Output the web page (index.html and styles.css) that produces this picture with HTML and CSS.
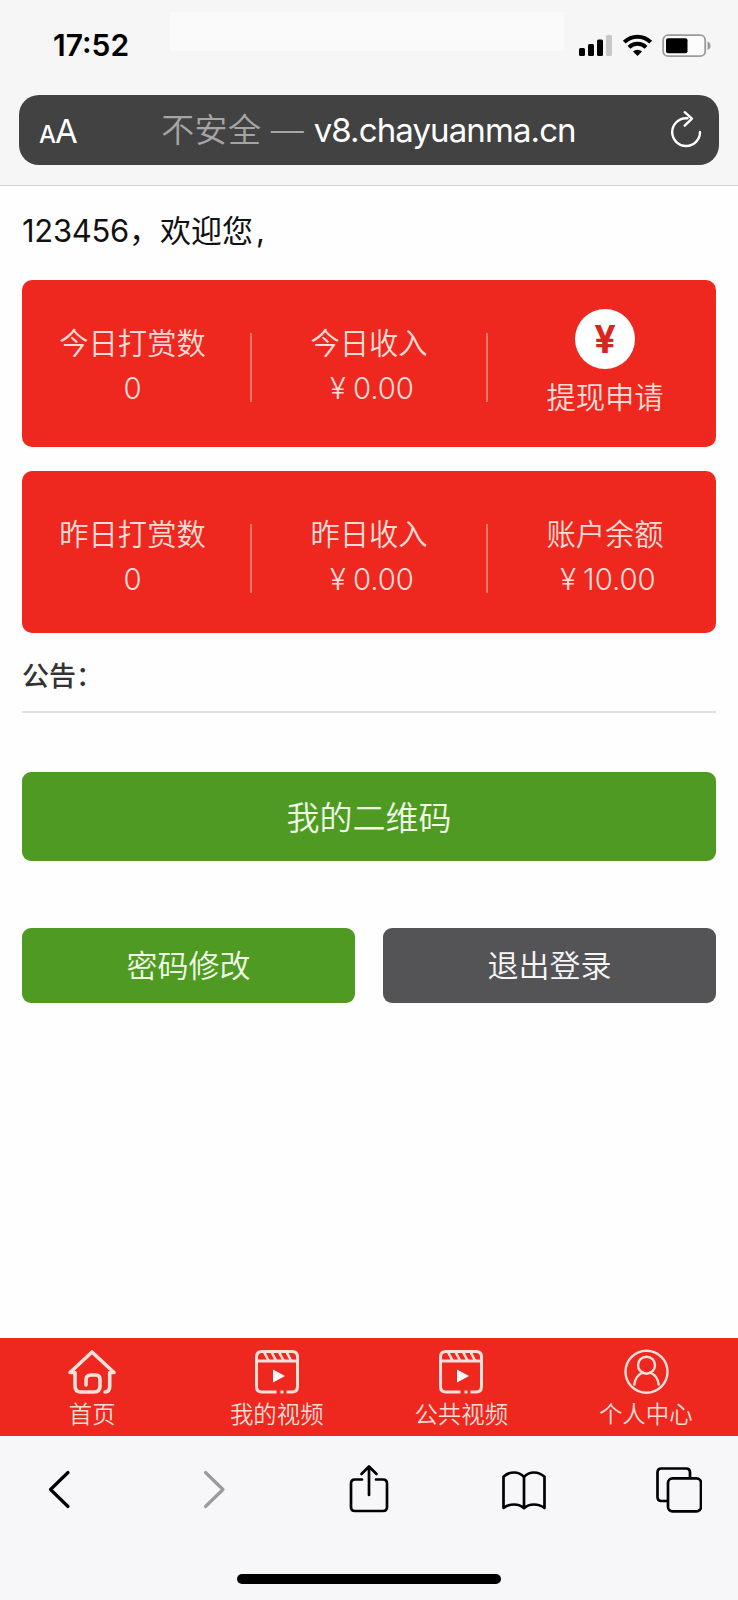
FILE: index.html
```html
<!DOCTYPE html>
<html lang="zh-CN">
<head>
    <meta charset="UTF-8">
    <meta name="viewport" content="width=device-width, initial-scale=1">
    <title>首页</title>
    <link rel="stylesheet" href="styles.css">
</head>
<body>
    <div class="page">
        <!-- 顶部 -->
        <header class="header">
            <div class="status">
                <span class="time">17:52</span>
                <span class="patch"></span>
                <svg class="status-icons" width="134" height="24" viewBox="0 0 134 24">
                    <rect x="1" y="14" width="6" height="8" rx="1.5"/>
                    <rect x="10" y="10" width="6" height="12" rx="1.5"/>
                    <rect x="19" y="5.5" width="6" height="16.5" rx="1.5"/>
                    <rect x="28" y="1" width="6" height="21" rx="1.5" fill="#c8c8c8"/>
                    <g fill="none" stroke="#000" stroke-width="4">
                        <path d="M46.3 8.200a18.500 18.500 0 0 1 26.400 0"/>
                        <path d="M51 13.300a12 12 0 0 1 17 0"/>
                    </g>
                    <path d="M55 17.500a6.600 6.600 0 0 1 9 0L59.500 22z"/>
                    <rect x="85.200" y="1.200" width="42" height="21" rx="5" fill="#fcfcfc" stroke="#9a9a9a" stroke-width="1.800"/>
                    <rect x="88" y="4.200" width="21.500" height="15" rx="2"/>
                    <path d="M129.500 7.500q3 1 3 4.200t-3 4.200z" fill="#9a9a9a"/>
                </svg>
            </div>
            <div class="address">
                <span class="aa"><small>A</small>A</span>
                <span class="url"><span class="unsafe">不安全 — </span>v8.chayuanma.cn</span>
                <svg class="reload" width="32" height="38" viewBox="0 0 32 38">
                    <path d="M17.500 8.200h-1.700A13.900 13.900 0 1 0 30 22M14.700 2.200l7.300 6.500-7.300 7" fill="none" stroke="#fff" stroke-width="2.400" stroke-linecap="round" stroke-linejoin="round"/>
                </svg>
            </div>
        </header>

        <!-- 内容 -->
        <main class="main">
            <p class="welcome"><span class="user">123456</span>，欢迎您<span class="end">,</span></p>

            <div class="card today">
                <div class="item">
                    <span>今日打赏数</span>
                    <span class="num">0</span>
                </div>
                <div class="item">
                    <span>今日收入</span>
                    <span class="num"><i>¥</i>0.00</span>
                </div>
                <a class="item apply" href="#">
                    <span class="coin">¥</span>
                    <span>提现申请</span>
                </a>
            </div>

            <div class="card yesterday">
                <div class="item">
                    <span>昨日打赏数</span>
                    <span class="num">0</span>
                </div>
                <div class="item">
                    <span>昨日收入</span>
                    <span class="num"><i>¥</i>0.00</span>
                </div>
                <div class="item">
                    <span>账户余额</span>
                    <span class="num"><i>¥</i>10.00</span>
                </div>
            </div>

            <div class="notice">公告：</div>

            <a class="btn btn-code" href="#">我的二维码</a>
            <div class="btn-row">
                <a class="btn" href="#">密码修改</a>
                <a class="btn btn-out" href="#">退出登录</a>
            </div>
        </main>

        <!-- 底部导航 -->
        <nav class="tabbar">
            <a class="tab" href="#">
                <svg width="50" height="46" viewBox="0 0 50 46">
                    <path d="M8 23.500H3L25 3l22 20.500h-4.300v14q0 5-4.500 5.500M8 23.500V37q0 6 6 6h13q6 0 6-6v-6.500q0-4.500-4.500-4.500H24q-5 0-5 5v5" fill="none" stroke="#fde0da" stroke-width="3.600" stroke-linecap="round" stroke-linejoin="round"/>
                </svg>
                <span>首页</span>
            </a>
            <a class="tab" href="#">
                <svg width="46" height="46" viewBox="0 0 46 46">
                    <path d="M22.500 43H8q-5.500 0-5.500-5.500V8q0-5.500 5.500-5.500h30q5.500 0 5.500 5.500v29.500q0 5.500-5.500 5.500h-5.500M26.500 43h3M3 12h40" fill="none" stroke="#fde0da" stroke-width="3"/>
                    <path d="M10 3l4.500 8.500M17.500 3l4.500 8.500M25 3l4.500 8.500M32.500 3l4.500 8.500" stroke="#fde0da" stroke-width="2.600"/>
                    <path d="M19 20.500v13L31 27z" fill="#fff"/>
                </svg>
                <span>我的视频</span>
            </a>
            <a class="tab" href="#">
                <svg width="46" height="46" viewBox="0 0 46 46">
                    <path d="M22.500 43H8q-5.500 0-5.500-5.500V8q0-5.500 5.500-5.500h30q5.500 0 5.500 5.500v29.500q0 5.500-5.500 5.500h-5.500M26.500 43h3M3 12h40" fill="none" stroke="#fde0da" stroke-width="3"/>
                    <path d="M10 3l4.500 8.500M17.500 3l4.500 8.500M25 3l4.500 8.500M32.500 3l4.500 8.500" stroke="#fde0da" stroke-width="2.600"/>
                    <path d="M19 20.500v13L31 27z" fill="#fff"/>
                </svg>
                <span>公共视频</span>
            </a>
            <a class="tab" href="#">
                <svg width="46" height="46" viewBox="0 0 46 46">
                    <g fill="none" stroke="#fde0da" stroke-width="2.400">
                        <circle cx="23.500" cy="22.700" r="21"/>
                        <circle cx="23.500" cy="16.200" r="8.500"/>
                        <path d="M11.300 35.500q1.200-9 8.700-12M35.700 35.500q-1.200-9-8.700-12" stroke-linecap="round"/>
                    </g>
                </svg>
                <span>个人中心</span>
            </a>
        </nav>

        <!-- 浏览器工具栏 -->
        <footer class="toolbar">
            <div class="tools">
                <svg width="46" height="50" viewBox="0 0 46 50">
                    <path d="M32 8.500L14.500 25.500l17.500 17" fill="none" stroke="#000" stroke-width="3.200" stroke-linecap="round" stroke-linejoin="round"/>
                </svg>
                <svg width="46" height="50" viewBox="0 0 46 50">
                    <path d="M14.500 8.500l17.500 17-17.500 17" fill="none" stroke="#9b9b9e" stroke-width="3.200" stroke-linecap="round" stroke-linejoin="round"/>
                </svg>
                <svg width="46" height="50" viewBox="0 0 46 50">
                    <path d="M16 15.500H9q-4 0-4 4v23.500q0 4 4 4h28q4 0 4-4V19.500q0-4-4-4h-7M23 31V3M15.500 10L23 2.500 30.500 10" fill="none" stroke="#000" stroke-width="2.700" stroke-linecap="round" stroke-linejoin="round"/>
                </svg>
                <svg width="46" height="50" viewBox="0 0 46 50">
                    <path d="M23 13Q19 8.500 13 8.500T2.500 12.800V44Q7 40.500 13 40.500T23 44.200Q27 40.500 33 40.500T43.500 44V12.800Q39 8.500 33 8.500T23 13V44" fill="none" stroke="#000" stroke-width="2.700" stroke-linejoin="round"/>
                </svg>
                <svg width="46" height="50" viewBox="0 0 46 50">
                    <rect x="12" y="14.300" width="33" height="33" rx="4.500" fill="none" stroke="#000" stroke-width="2.700"/>
                    <path d="M12 37H5.500q-4 0-4-4V8.500q0-4 4-4H30q4 0 4 4v5.800" fill="none" stroke="#000" stroke-width="2.700"/>
                </svg>
            </div>
            <div class="home-line"></div>
        </footer>
    </div>
</body>
</html>
```

FILE: styles.css
```css
*{
    box-sizing: border-box;
}

body{
    margin: 0;
    background-color: #fefefe;
    font-family: Inter, "Noto Sans CJK SC", sans-serif;
    color: #111;
}

a{
    color: inherit;
    text-decoration: none;
}

svg{
    display: block;
    flex: none;
}

.page{
    width: 738px;
    height: 1600px;
    display: flex;
    flex-direction: column;
    overflow: hidden;
}

/* 顶部 */
.header{
    height: 186px;
    padding: 0 19px;
    background-color: #f6f6f6;
    border-bottom: 1px solid #d6d6d6;
}

.status{
    height: 95px;
    padding: 12px 7px 0 34px;
    display: flex;
    align-items: flex-start;
}

.time{
    width: 117px;
    padding-top: 16px;
    font-size: 30px;
    line-height: 35px;
    font-weight: 600;
    color: #000;
}

.patch{
    width: 394px;
    height: 39px;
    background-color: #fafafa;
}

.status-icons{
    margin: 22px 0 0 14px;
}

.address{
    height: 70px;
    padding: 0 17px 0 20px;
    border-radius: 20px;
    background-color: #424242;
    color: #fff;
    display: flex;
    align-items: center;
    justify-content: space-between;
    font-size: 33px;
}

.aa{
    width: 40px;
    padding-top: 1px;
    white-space: nowrap;
    font-size: 33px;
    letter-spacing: -1px;
}

.aa small{
    font-size: 24px;
    font-weight: 500;
}

.url{
    padding: 0 12px 4px 0;
    white-space: nowrap;
    letter-spacing: -0.9px;
}

.unsafe{
    color: #a5a5a5;
    letter-spacing: 0.3px;
    font-weight: 350;
}

.reload{
    margin-top: -2px;
}

/* 内容 */
.main{
    flex: 1;
    padding: 0 22px;
}

.welcome{
    margin: 0;
    padding-top: 22px;
    height: 94px;
    font-size: 31px;
    line-height: 46px;
}

.user{
    letter-spacing: -0.3px;
}

.end{
    margin-left: 3px;
}

.card{
    height: 167px;
    padding-top: 8px;
    border-radius: 10px;
    background-color: #ee281f;
    color: #fcdcd6;
    display: grid;
    grid-template-columns: 230px 236px 228px;
    align-items: center;
    font-size: 29.3px;
    line-height: 45px;
    font-weight: 350;
}

.yesterday{
    height: 162px;
    margin-top: 24px;
    padding-top: 13px;
}

.item{
    height: 69px;
    padding-bottom: 4px;
    display: flex;
    flex-direction: column;
    align-items: center;
    justify-content: center;
    white-space: nowrap;
    border-right: 2px solid #f5766c;
}

.item:first-child{
    padding-right: 7px;
}

.item:last-child{
    padding-left: 6px;
    border-right: none;
}

.apply{
    padding-bottom: 7px;
}

.num i{
    margin: 0 7px 0 6px;
    font-style: normal;
}

.coin{
    width: 60px;
    height: 60px;
    margin-bottom: 6px;
    border-radius: 50%;
    background-color: #fff;
    color: #d9251d;
    font-size: 38px;
    line-height: 60px;
    font-weight: 700;
    text-align: center;
}

.notice{
    height: 80px;
    padding-top: 24px;
    border-bottom: 2px solid #e2e0e2;
    font-size: 27px;
    line-height: 40px;
    font-weight: 500;
    color: #333;
}

.btn{
    height: 75px;
    padding-bottom: 5px;
    border-radius: 9px;
    background-color: #4f9a22;
    color: #effbe6;
    display: flex;
    align-items: center;
    justify-content: center;
    font-size: 31px;
    font-weight: 350;
}

.btn-code{
    height: 89px;
    margin-top: 59px;
    padding-bottom: 1px;
    font-size: 33px;
}

.btn-row{
    margin-top: 67px;
    display: grid;
    grid-template-columns: 1fr 1fr;
    gap: 28px;
}

.btn-out{
    background-color: #545456;
    color: #f6f6f6;
}

/* 底部导航 */
.tabbar{
    height: 98px;
    padding-top: 11px;
    background-color: #ee281f;
    color: #fcdcd6;
    display: grid;
    grid-template-columns: repeat(4, 1fr);
}

.tab{
    display: flex;
    flex-direction: column;
    align-items: center;
    font-size: 23.4px;
    line-height: 40px;
    font-weight: 350;
}

/* 浏览器工具栏 */
.toolbar{
    height: 164px;
    padding: 28px 36px 0;
    background-color: #f7f6f9;
}

.tools{
    display: flex;
    justify-content: space-between;
}

.home-line{
    width: 264px;
    height: 10px;
    margin: 60px auto 0;
    border-radius: 5px;
    background-color: #000;
}
```
